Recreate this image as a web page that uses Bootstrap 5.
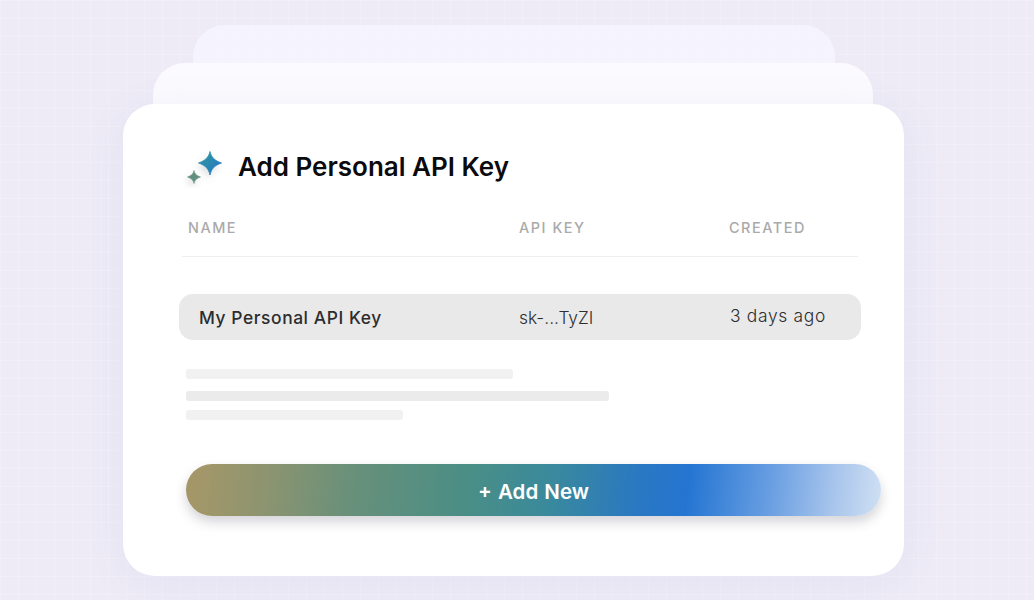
<!DOCTYPE html>
<html lang="en">
<head>
    <meta charset="UTF-8">
    <meta name="viewport" content="width=device-width, initial-scale=1.0">
    <title>Add Personal API Key</title>
    <link href="https://cdn.jsdelivr.net/npm/bootstrap@5.3.0/dist/css/bootstrap.min.css" rel="stylesheet">
    <style>
        body {
            width: 1034px;
            height: 600px;
            overflow: hidden;
            position: relative;
            font-family: "Inter", "Liberation Sans", sans-serif;
            background-color: #eeebf7;
            background-image:
                linear-gradient(to right, rgba(255,255,255,.16) 1px, transparent 1px),
                linear-gradient(to bottom, rgba(255,255,255,.16) 1px, transparent 1px);
            background-size: 18px 18px;
        }

        /* the two sheets behind the main card */
        .sheet-back, .sheet-mid {
            position: absolute;
        }

        .sheet-back {
            left: 193px;
            top: 25px;
            width: 642px;
            height: 120px;
            border-radius: 32px 32px 0 0;
            background: rgba(248, 246, 255, .7);
        }

        .sheet-mid {
            left: 153px;
            top: 63px;
            width: 720px;
            height: 100px;
            border-radius: 32px 32px 0 0;
            background: #fbfafe;
        }

        .key-card {
            position: absolute;
            left: 123px;
            top: 104px;
            width: 781px;
            height: 472px;
            border-radius: 32px;
            padding: 43px 0 0 56px;
            box-shadow: 0 6px 40px rgba(120, 110, 190, .08);
        }

        .key-title {
            height: 40px;
            margin-left: 4px;
            gap: 15px;
            font-size: 26px;
            font-weight: 600;
            color: #0b0b0d;
        }

        .key-title span {
            margin-top: -2px;
        }

        .key-cols {
            display: grid;
            grid-template-columns: 320px 211px 1fr;
        }

        .key-head {
            grid-template-columns: 331px 210px 1fr;
            width: 676px;
            margin: 31px 0 0 3px;
            padding: 0 0 18px 6px;
            border-bottom: 1px solid #efefef;
            font-size: 14.4px;
            font-weight: 500;
            line-height: 20px;
            letter-spacing: 1.55px;
            color: #aaaaaa;
        }

        .key-row {
            width: 682px;
            height: 46px;
            margin-top: 37px;
            padding: 2px 0 0 20px;
            align-items: center;
            border-radius: 14px;
            background: #e9e9e9;
            font-size: 17.4px;
            color: #2d2d2f;
        }

        .key-name {
            font-weight: 500;
            letter-spacing: .58px;
        }

        .key-value {
            font-weight: 300;
        }

        .key-date {
            font-weight: 300;
            letter-spacing: .7px;
            margin-top: -3px;
        }

        .skeleton {
            margin: 29px 0 0 7px;
        }

        .skeleton-bar {
            height: 10px;
            border-radius: 3px;
            background: #f1f1f1;
        }

        .skeleton-bar.dark {
            margin: 12px 0 9px;
            background: #ebebeb;
        }

        .add-btn {
            width: 695px;
            height: 52px;
            margin: 44px 0 0 7px;
            padding-top: 10px;
            border: 0;
            border-radius: 26px;
            background: linear-gradient(96deg, #a39769 2%, #8c9470 12%, #68907a 24%, #4b8e85 40%, #3a8a9c 52%, #2a78c2 65%, #2475d2 72%, #6a9fe2 84%, #a8c5ec 93%, #d0e0f3 100%);
            box-shadow: 0 6px 12px rgba(60, 60, 80, .22);
            color: #fff;
            font-size: 20.5px;
            font-weight: 600;
            word-spacing: 1px;
        }

        .add-btn:hover, .add-btn:active {
            color: #fff;
        }
    </style>
</head>
<body>
    <div class="sheet-back"></div>
    <div class="sheet-mid"></div>

    <div class="key-card bg-white">
        <div class="key-title d-flex align-items-center">
            <svg width="40" height="42" viewBox="0 0 40 42" aria-hidden="true">
                <defs>
                    <linearGradient id="sparkBig" x1="0" y1="0" x2="1" y2="1">
                        <stop offset="0" stop-color="#2f9a9c"/>
                        <stop offset="1" stop-color="#2474c8"/>
                    </linearGradient>
                    <filter id="sparkShadow" x="-50%" y="-50%" width="200%" height="200%">
                        <feDropShadow dx="-2" dy="4" stdDeviation="3" flood-color="#666" flood-opacity=".2"/>
                    </filter>
                </defs>
                <path filter="url(#sparkShadow)" fill="url(#sparkBig)" stroke="url(#sparkBig)" stroke-width=".8" stroke-linejoin="round" d="M27 5.500C28.500 11.500 31.500 14.500 38.500 17C31.500 19.500 28.500 22.500 27 29C25.500 22.500 22.500 19.500 15.500 17C22.500 14.500 25.500 11.500 27 5.500Z"/>
                <path filter="url(#sparkShadow)" fill="#62907f" stroke="#62907f" stroke-width=".6" stroke-linejoin="round" d="M11 24.500C11.800 27.800 13.300 29.500 17.500 31C13.300 32.500 11.800 34.200 11 37.500C10.200 34.200 8.700 32.500 4.500 31C8.700 29.500 10.200 27.800 11 24.500Z"/>
            </svg>
            <span>Add Personal API Key</span>
        </div>

        <div class="key-cols key-head">
            <div>NAME</div>
            <div>API KEY</div>
            <div>CREATED</div>
        </div>

        <div class="key-cols key-row">
            <div class="key-name">My Personal API Key</div>
            <div class="key-value">sk-...TyZI</div>
            <div class="key-date">3 days ago</div>
        </div>

        <div class="skeleton d-flex flex-column">
            <div class="skeleton-bar" style="width: 327px"></div>
            <div class="skeleton-bar dark" style="width: 423px"></div>
            <div class="skeleton-bar" style="width: 217px"></div>
        </div>

        <button type="button" class="btn add-btn d-block">+ Add New</button>
    </div>

    <script src="https://cdn.jsdelivr.net/npm/bootstrap@5.3.0/dist/js/bootstrap.bundle.min.js"></script>
</body>
</html>
